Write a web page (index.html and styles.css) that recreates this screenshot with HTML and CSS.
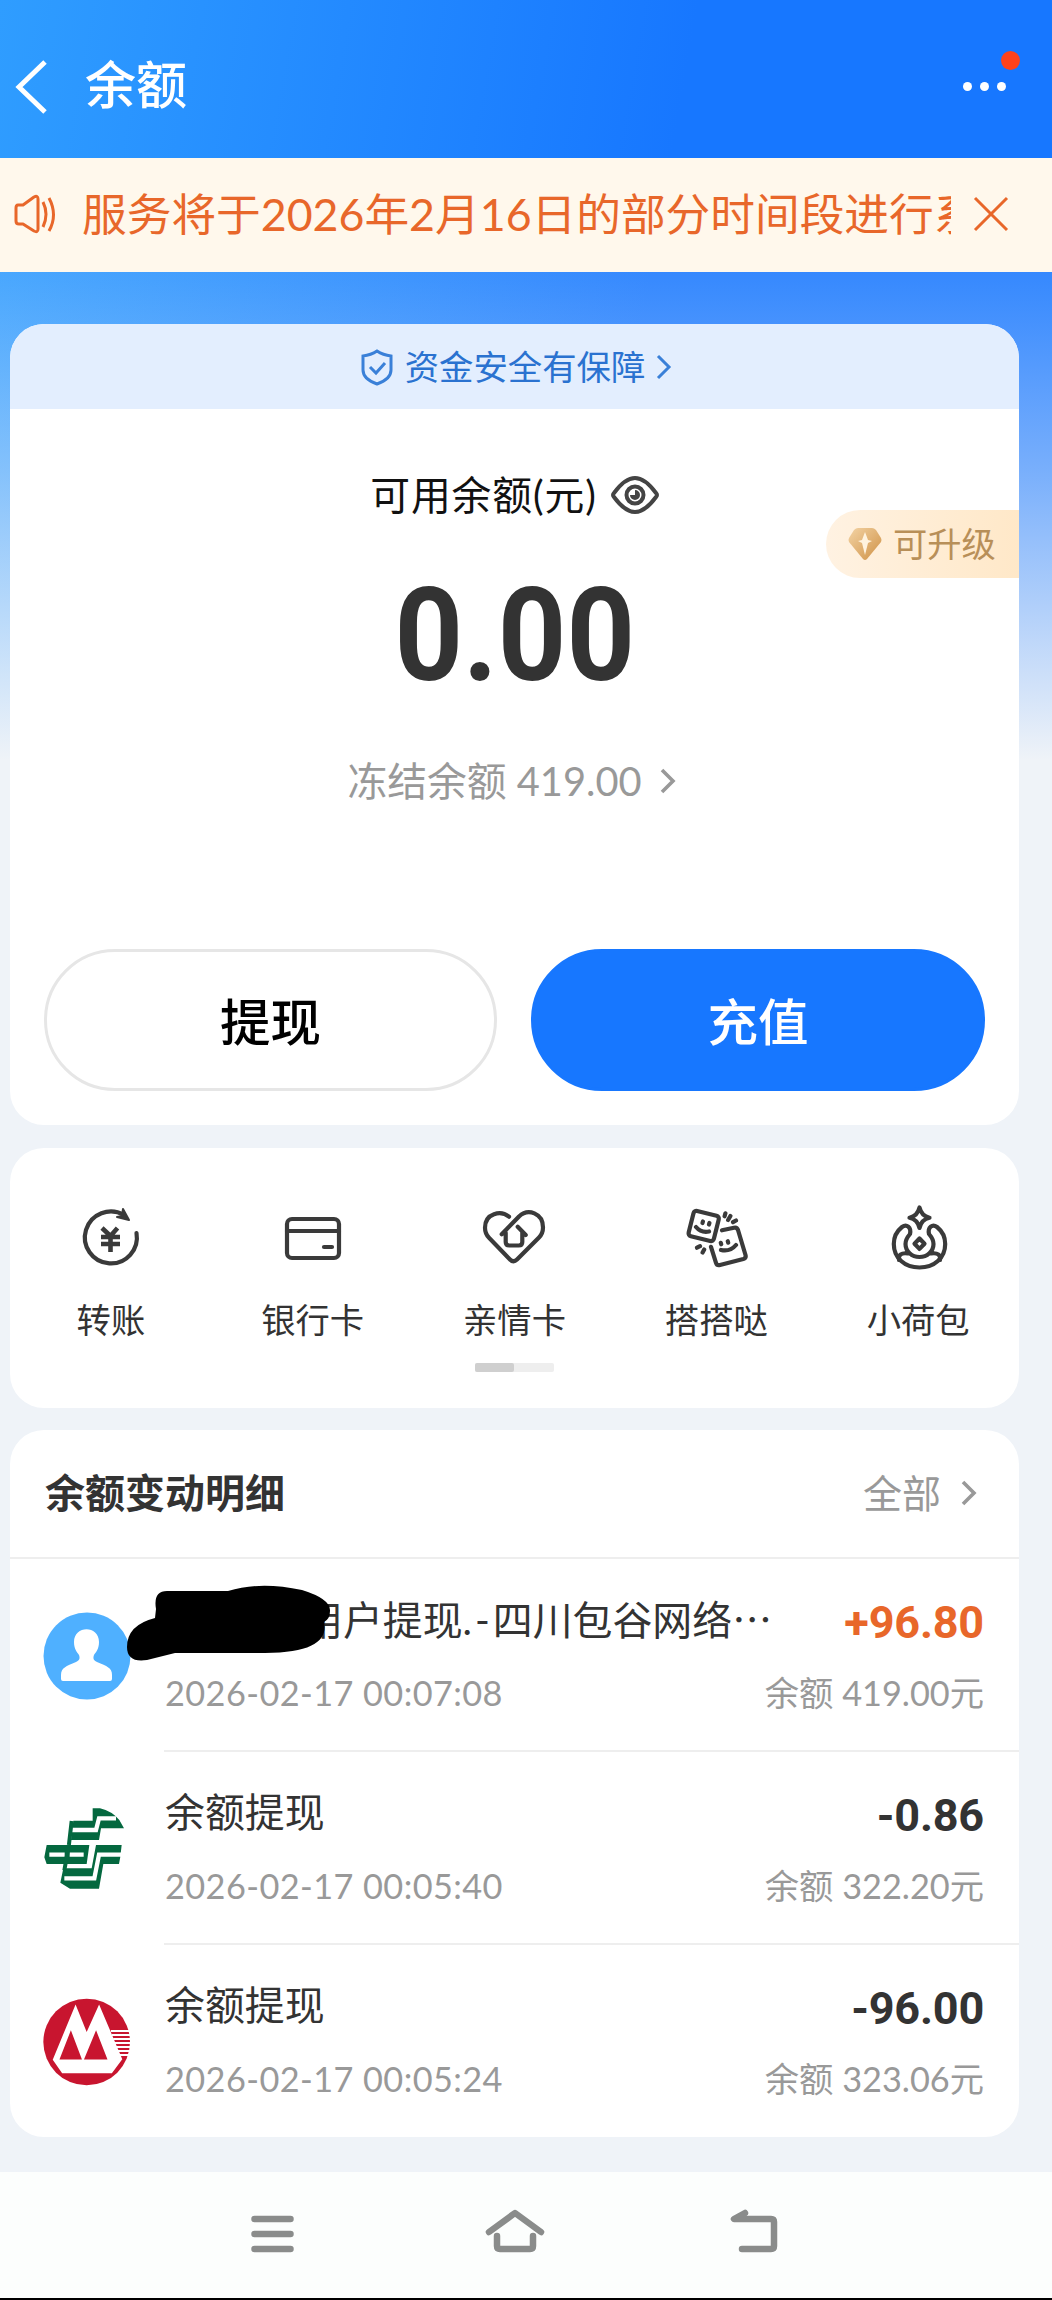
FILE: index.html
```html
<!DOCTYPE html>
<html lang="zh-CN">
<head>
<meta charset="utf-8">
<title>余额</title>
<link rel="stylesheet" href="styles.css">
</head>
<body>
<div class="page">
  <header class="topbar">
    <svg class="back" width="34" height="56" viewBox="0 0 34 56"><path d="M31 3 5 28 31 53"/></svg>
    <h1>余额</h1>
    <div class="more"><i></i><i></i><i></i><b></b></div>
  </header>

  <div class="notice">
    <svg class="speaker" width="44" height="42" viewBox="0 0 44 42"><path d="M6 12h5L22 4q4-2 4 2v30q0 4-4 2L11 31H7q-3 0-3-3V15q0-3 2-3zM31 9q6 12 0 25M37 5q9 17 0 33"/></svg>
    <p>服务将于2026年2月16日的部分时间段进行系统</p>
    <svg class="close" width="36" height="36" viewBox="0 0 36 36"><path d="M2 2 34 34M34 2 2 34"/></svg>
  </div>

  <main class="content">
    <section class="card balance">
      <div class="secure">
        <svg width="34" height="38" viewBox="0 0 34 38"><path d="M17 3q6 4 14 5v14q0 9-14 14Q3 31 3 22V8q8-1 14-5zM10 19l6 6 9-10"/></svg>
        <span>资金安全有保障</span>
        <svg width="16" height="26" viewBox="0 0 16 26"><path d="M2 2 13 13 2 24"/></svg>
      </div>
      <div class="label">
        <span>可用余额(元)</span>
        <svg width="48" height="40" viewBox="0 0 48 40"><path d="M3 22q-2-2 0-4Q14 3 24 3t21 15q2 2 0 4Q34 37 24 37T3 22z"/><circle cx="24" cy="20" r="8.5"/><path class="pupil" d="M24 15v5h-5a5 5 0 1 0 5-5z"/></svg>
      </div>
      <div class="amount"><span>0.00</span></div>
      <div class="frozen">
        <span>冻结余额 419.00</span>
        <svg width="18" height="28" viewBox="0 0 18 28"><path d="M3 3 14 14 3 25"/></svg>
      </div>
      <div class="buttons">
        <button class="btn">提现</button>
        <button class="btn primary">充值</button>
      </div>
      <div class="upgrade">
        <svg width="34" height="34" viewBox="0 0 34 34"><defs><linearGradient id="gem" x1="0" y1="0" x2="1" y2="1"><stop offset="0" stop-color="#f3d3a4"/><stop offset="1" stop-color="#cf9145"/></linearGradient></defs><path fill="url(#gem)" d="M10 1h14q2 0 4 2l5 8q1 2 0 4L19 32q-2 2-4 0L1 15q-1-2 0-4l5-8q2-2 4-2z"/><path fill="#fff3df" d="m17 5 3 8 4 1-4 2-3 12-3-12-4-2 4-1z"/></svg>
        <span>可升级</span>
      </div>
    </section>

    <section class="card shortcuts">
      <div class="grid">
        <div class="item">
          <svg width="64" height="68" viewBox="0 0 64 68"><path d="M45 11A26 26 0 1 0 57.500 29"/><path class="yen" d="m23 24 8.500 8 7-8M22 33h19M22 40h19M31.500 32v16"/><path class="fill" d="m44 5 6 11-12-3 5-1z"/></svg>
          <span>转账</span>
        </div>
        <div class="item">
          <svg width="64" height="68" viewBox="0 0 64 68"><rect x="6" y="15" width="52" height="39" rx="5"/><path d="M6 27h52"/><path d="M43 43h8"/></svg>
          <span>银行卡</span>
        </div>
        <div class="item">
          <svg width="64" height="68" viewBox="0 0 64 68"><path d="M27 12.700C19 6 3 9 3 23.700q0 6 4 10L28 55.500q3.500 3.500 7 0L57 33.500q4-4 4-10C61 9 46 4 37 12.500L19.700 30.300M23.700 28.700V38q0 3.500 3.500 3.500h9.600q3.500 0 3.500-3.500v-9.500M43.700 31l-8-8.300"/></svg>
          <span>亲情卡</span>
        </div>
        <div class="item">
          <svg width="64" height="68" viewBox="0 0 64 68"><rect x="6.700" y="9" width="26" height="26" rx="3" transform="rotate(14 19.700 22)"/><path d="m38 26.300 12-2.600q3-.7 4 2.300l7.500 25q.8 3-2.200 4L36 61q-3 .8-4-2.200l-5-16M18.900 17.500l-.4 1.500M25.400 19l-.4 1.500M12 23q5 6 13 4.500M36.800 38.800l.4 1.500M43.800 37.200l.4 1.500M37 46q9 2 15-5M41.400 9.300l-.8 3M46.400 12l-2.300 4M52 16.500l-3 1.700M13 43.700l3-1.500M18.600 48.500l1.600-3"/></svg>
          <span>搭搭哒</span>
        </div>
        <div class="item">
          <svg width="64" height="68" viewBox="0 0 64 68"><path d="M33.500 3.500q2 8.500 10 10.200-8 1.700-10 10.200-2-8.500-10-10.200 8-1.700 10-10.200zM24 30c1.500-7-3.500-10.500-8-7C11 27 7.800 33 7.800 40c0 14 11 23.500 25.700 23.500S59.200 54 59.200 40c0-7-3.200-13-8.200-17-4.500-3.500-9.500 0-8 7 3 3.500 4.500 6 4.500 10a14 13 0 0 1-28 0c0-4 1.500-6.500 4.500-10zM13 56q-1-8 9-6.500M54 56q1-8-9-6.500M33.500 34.500 38.500 39.700l-5 5.200-5-5.200z"/></svg>
          <span>小荷包</span>
        </div>
      </div>
      <div class="scroll"><i></i></div>
    </section>

    <section class="card history">
      <div class="head">
        <h2>余额变动明细</h2>
        <span class="all">全部 <svg width="18" height="28" viewBox="0 0 18 28"><path d="M3 3 14 14 3 25"/></svg></span>
      </div>
      <div class="row">
        <svg class="logo" width="88" height="88" viewBox="0 0 88 88"><circle cx="44" cy="44" r="43.500" fill="#4fb0ff"/><path fill="#fff" d="M31 30c0-17 25-17 25 0 0 7-3 10-5 13-1 3-1 5 3 7 10 4 15 6 15 13v4q0 2-2 2H20q-2 0-2-2v-4c0-7 5-9 15-13 4-2 4-4 3-7-2-3-5-6-5-13z"/></svg>
        <div class="info">
          <div class="line"><p class="name masked">用户提现<span class="sep">.-</span>四川包谷网络<span class="dots">…</span></p><b class="sum plus">+96.80</b></div>
          <div class="line small"><span class="time">2026-02-17 00:07:08</span><span>余额 419.00元</span></div>
        </div>
        <svg class="scribble" width="206" height="80" viewBox="0 0 206 80"><path d="M29 25Q26 7 40 7H101Q133-3 175 6 204 15 203 27 203 35 197 38C201 56 186 69 138 69H48L20 76Q0 79 0 63 0 41 28 34z"/></svg>
      </div>
      <div class="row">
        <svg class="logo" width="88" height="88" viewBox="130 135 262 264"><g fill="#04683f"><path d="M278 145h22q35 8 58 35l14 25h-69l-6 35h-84l7-58h58zM140 255h128l-8 57H140l-7-20zM365 255h-77l-13 70h-85l-9 43 29 18h87l13-74h47l4-22z"/></g><path d="M348 175h-51l-9 35h-74M148 284h46M209 284h42M368 284h-71l-14 71h-90" fill="none" stroke="#fff" stroke-width="13"/><path d="m215 183-8 70-14 78" fill="none" stroke="#04683f" stroke-width="12"/></svg>
        <div class="info">
          <div class="line"><p class="name">余额提现</p><b class="sum">-0.86</b></div>
          <div class="line small"><span class="time">2026-02-17 00:05:40</span><span>余额 322.20元</span></div>
        </div>
      </div>
      <div class="row">
        <svg class="logo" width="88" height="88" viewBox="128 714 262 262"><circle cx="258" cy="845" r="129" fill="#c8152f"/><path d="M330 812h60M333 824h60M337 836h54M341 848h54M345 860h50M350 872h40M354 884h32" stroke="#fff" stroke-width="6"/><path fill="#fff" d="m157 898 68-165 33 82 37-82 69 163-31 42H185z"/><path fill="#c8152f" d="m177 897 34-87 33 87zM250 897l36-87 34 87z"/></svg>
        <div class="info">
          <div class="line"><p class="name">余额提现</p><b class="sum">-96.00</b></div>
          <div class="line small"><span class="time">2026-02-17 00:05:24</span><span>余额 323.06元</span></div>
        </div>
      </div>
    </section>
  </main>

  <nav class="navbar">
    <svg width="60" height="50" viewBox="0 0 60 50"><path d="M10.500 11h36M10.500 26h36M10.500 41h36"/></svg>
    <svg width="60" height="50" viewBox="0 0 60 50"><path d="M4 24 30 5 56 24M12 28v10q0 3 3 3h30q3 0 3-3V28"/></svg>
    <svg width="60" height="50" viewBox="0 0 60 50"><path d="M19 5 8 11h37q3 0 3 3v24q0 3-3 3H16"/></svg>
  </nav>
</div>
</body>
</html>
```
FILE: styles.css
```css
* { box-sizing: border-box; }

body {
  margin: 0;
  background: #eff3f8;
  color: #333;
  font-family: Lato, "Noto Sans CJK SC", sans-serif;
}

h1, h2, p { margin: 0; }

svg { display: block; flex: none; fill: none; }

.page {
  width: 1052px;
  height: 2300px;
  display: flex;
  flex-direction: column;
  background:
    linear-gradient(180deg, rgba(239, 243, 248, 0) 158px, rgba(239, 243, 248, .14) 272px, rgba(239, 243, 248, .22) 325px, rgba(239, 243, 248, .45) 470px, #eff3f8 760px),
    linear-gradient(100deg, #2f9dff 0, #1777ff 48%, #1777ff 100%);
}

.topbar {
  height: 158px;
  flex: none;
  display: flex;
  align-items: center;
  padding: 15px 46px 0 14px;
  color: #fff;
}

.back { stroke: #fff; stroke-width: 5; }

.topbar h1 {
  margin: -3px 0 0 37px;
  font-size: 51px;
  font-weight: 500;
  line-height: 60px;
}

.more { position: relative; margin-left: auto; display: flex; gap: 8px; }
.more i { width: 9px; height: 9px; border-radius: 50%; background: #fff; }
.more b {
  position: absolute;
  left: 38px;
  top: -31px;
  width: 19px;
  height: 19px;
  border-radius: 50%;
  background: #ff421a;
}

.notice {
  height: 114px;
  flex: none;
  display: flex;
  align-items: center;
  padding: 0 43px 2px 12px;
  background: #fff8ec;
  color: #e8672a;
}

.notice svg { stroke: #e8672a; stroke-width: 3; stroke-linejoin: round; }
.notice p {
  width: 869px;
  margin-left: 26px;
  overflow: hidden;
  white-space: nowrap;
  font-size: 44.700px;
  line-height: 60px;
}
.notice .close { margin-left: auto; }

.content {
  flex: 1;
  padding: 52px 33px 0 10px;
  display: flex;
  flex-direction: column;
}

.card {
  position: relative;
  flex: none;
  background: #fff;
  border-radius: 34px;
}

.balance { height: 801px; overflow: hidden; }

.secure {
  height: 85px;
  display: flex;
  align-items: center;
  justify-content: center;
  gap: 11px;
  padding: 0 0 0 3px;
  background: #e3eefe;
  color: #2a72d0;
  font-size: 34.400px;
  line-height: 46px;
}
.secure svg { stroke: #3a80d8; stroke-width: 3; }

.label {
  margin-top: 58px;
  height: 56px;
  display: flex;
  align-items: center;
  justify-content: center;
  gap: 14px;
  color: #111;
  font-size: 39.800px;
  letter-spacing: .9px;
  line-height: 56px;
}
.label svg { stroke: #444; stroke-width: 4; }
.label .pupil { fill: #444; stroke: none; }

.amount {
  margin-top: 63px;
  height: 100px;
  text-align: center;
  font: 700 130px/100px Roboto, sans-serif;
}
.amount span { display: inline-block; transform: scaleX(.92); }

.frozen {
  margin-top: 67px;
  height: 56px;
  display: flex;
  align-items: center;
  justify-content: center;
  gap: 17px;
  padding-right: 5px;
  color: #999;
  font-size: 39.800px;
  line-height: 56px;
}
.frozen svg, .all svg { stroke: #999; stroke-width: 3.600; }

.buttons {
  margin-top: 140px;
  padding: 0 34px;
  display: grid;
  grid-template-columns: 453px 454px;
  justify-content: space-between;
}
.btn {
  height: 142px;
  padding: 4px 0 0;
  border: 3px solid #e6e6e6;
  border-radius: 71px;
  background: #fff;
  color: #000;
  font: 500 50.500px/60px Lato, "Noto Sans CJK SC", sans-serif;
}
.btn.primary { border-color: #1777ff; background: #1777ff; color: #fff; }

.upgrade {
  position: absolute;
  right: 0;
  top: 186px;
  width: 193px;
  height: 68px;
  display: flex;
  align-items: center;
  gap: 11px;
  padding-left: 22px;
  border-radius: 34px 0 0 34px;
  background: linear-gradient(90deg, #fff2e2, #ffe8c8);
  color: #b88f58;
  font-size: 34.300px;
  line-height: 46px;
}

.shortcuts { margin-top: 23px; height: 260px; padding-top: 56px; }
.grid { display: grid; grid-template-columns: repeat(5, 1fr); }
.item {
  display: flex;
  flex-direction: column;
  align-items: center;
  gap: 25px;
  font-size: 34.300px;
  line-height: 46px;
}
.item svg { stroke: #3a3a3a; stroke-width: 4.200; stroke-linecap: round; stroke-linejoin: round; }
.item .yen { stroke-linecap: butt; stroke-width: 4.600; }
.item .fill { fill: #3a3a3a; stroke-width: 2; }

.scroll { width: 79px; height: 9px; margin: 20px auto 0; border-radius: 2px; background: #eee; }
.scroll i { display: block; width: 39px; height: 9px; border-radius: 2px; background: #cfcfcf; }

.history { margin-top: 22px; height: 707px; }
.head {
  height: 129px;
  display: flex;
  align-items: center;
  justify-content: space-between;
  padding: 0 41px 2px 35px;
  border-bottom: 2px solid #eee;
}
.head h2 { font-size: 40px; font-weight: 700; line-height: 56px; }
.all { display: flex; align-items: center; gap: 19px; color: #999; font-size: 39px; line-height: 56px; }

.row { position: relative; display: flex; height: 193px; padding-left: 33px; }
.logo { margin-top: 53px; }
.info {
  flex: 1;
  margin-left: 33px;
  padding: 32px 35px 0 1px;
  border-bottom: 2px solid #eee;
}
.row:last-child .info { border-bottom: 0; }
.line { display: flex; align-items: center; justify-content: space-between; height: 56px; white-space: nowrap; }
.name { font-size: 39.900px; line-height: 56px; }
.masked { padding-left: 138px; }
.sep { letter-spacing: 3px; }
.dots { font-family: "Noto Sans CJK SC", sans-serif; }
.sum { padding-top: 8px; font: 700 45px/56px Roboto, sans-serif; letter-spacing: -.2px; }
.plus { color: #e8672a; }
.small { margin-top: 18px; color: #999; font-size: 34.300px; line-height: 56px; }
.time { letter-spacing: .42px; }

.scribble { position: absolute; left: 117px; top: 25px; }
.scribble path { fill: #000; }

.navbar {
  height: 128px;
  flex: none;
  display: flex;
  justify-content: center;
  gap: 181px;
  padding: 36px 23px 0 0;
  background: #fcfefd;
  border-bottom: 2px solid #000;
}
.navbar svg { stroke: #8a8c8b; stroke-width: 6.500; stroke-linecap: round; stroke-linejoin: round; }
```
